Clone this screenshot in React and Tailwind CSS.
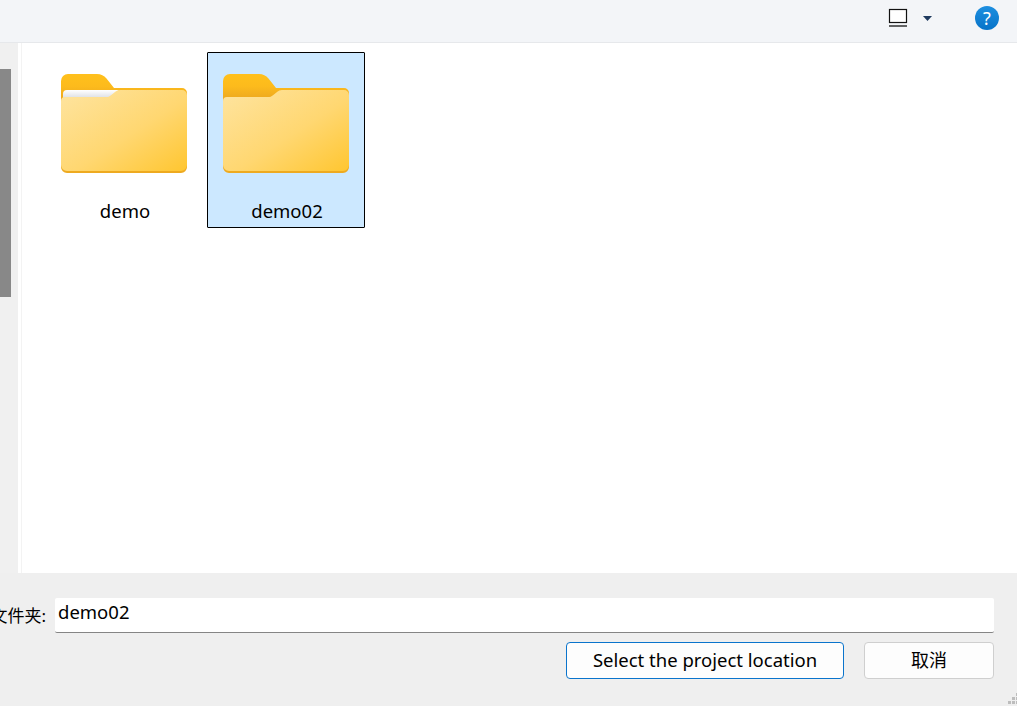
import React from 'react';

const FONT = "font-['Noto_Sans','Noto_Sans_CJK_SC',sans-serif]";

const Folder = ({ id, paper }) => (
  <svg width="126" height="99" viewBox="0 0 126 99" className="shrink-0">
    <defs>
      <linearGradient id={`${id}-tab`} gradientUnits="userSpaceOnUse" x1="0" y1="0" x2="0" y2="24">
        <stop offset="0" stopColor="#ffc01c" />
        <stop offset="0.5" stopColor="#fdbb1c" />
        <stop offset="1" stopColor="#eeaa20" />
      </linearGradient>
      <linearGradient id={`${id}-front`} x1="0" y1="0" x2="1" y2="1">
        <stop offset="0" stopColor="#fee4a0" />
        <stop offset="0.55" stopColor="#ffd771" />
        <stop offset="1" stopColor="#ffc630" />
      </linearGradient>
      <linearGradient id={`${id}-paper`} x1="0" y1="0" x2="0" y2="1">
        <stop offset="0" stopColor="#ffffff" />
        <stop offset="1" stopColor="#dcdfe4" />
      </linearGradient>
    </defs>
    <path
      d="M0 7a7 7 0 0 1 7-7h29c4 0 7 1.500 9.500 4.500L53 14h68a5 5 0 0 1 5 5V93a6 6 0 0 1-6 6H6a6 6 0 0 1-6-6Z"
      fill={`url(#${id}-tab)`}
    />
    {paper && (
      <path d="M2 20a4 4 0 0 1 4-4h52l-8 8H2Z" fill={`url(#${id}-paper)`} />
    )}
    <path
      d="M0 27a4 4 0 0 1 4-4h41c2 0 3.500-.5 5-1.800L54 18c1.500-1.300 3-2 5-2h62a5 5 0 0 1 5 5V91a6 6 0 0 1-6 6H6a6 6 0 0 1-6-6Z"
      fill={`url(#${id}-front)`}
    />
  </svg>
);

const Tile = ({ name, selected, paper }) => (
  <div
    className={`w-[158px] h-[176px] flex flex-col items-center pt-[21px] border ${
      selected ? 'bg-[#cce8ff] border-black rounded-[1px]' : 'border-transparent'
    }`}
  >
    <Folder id={name} paper={paper} />
    <div className="mt-[25px] ml-[2px] text-[18.500px] leading-[26px] text-black">{name}</div>
  </div>
);

export default function App() {
  return (
    <div className={`w-[1017px] h-[706px] flex flex-col overflow-hidden bg-[#efefef] ${FONT}`}>
      {/* toolbar */}
      <div className="h-[43px] shrink-0 flex items-start justify-end bg-[#f3f5f8] border-b border-[#e6e8eb]">
        <svg width="20" height="20" viewBox="0 0 20 20" className="mt-[8px]">
          <rect x="1.500" y="1.500" width="17" height="13" fill="#fff" stroke="#111" strokeWidth="1.200" />
          <path d="M1 18h18" stroke="#111" strokeWidth="1.300" />
        </svg>
        <svg width="9" height="5" viewBox="0 0 9 5" className="mt-[16px] ml-[15px]">
          <path d="M0 0h9L4.500 5Z" fill="#1f3a5f" />
        </svg>
        <div className="mt-[6px] ml-[43px] mr-[18px] w-[24px] h-[24px] rounded-full bg-gradient-to-b from-[#1d8fe0] to-[#0673c8] text-white text-[18px] leading-[24px] text-center">
          ?
        </div>
      </div>

      {/* body */}
      <div className="h-[530px] shrink-0 flex">
        <div className="w-[18px] shrink-0 bg-[#f0f0f0] pt-[26px]">
          <div className="w-[11px] h-[228px] bg-[#888888]" />
        </div>
        <div className="w-[3px] shrink-0 bg-white" />
        <div className="w-px shrink-0 bg-[#f3f3f3]" />
        <div className="flex-1 bg-white flex items-start gap-[4px] pl-[23px] pt-[9px]">
          <Tile name="demo" paper />
          <Tile name="demo02" selected />
        </div>
      </div>

      {/* footer */}
      <div className="relative flex-1 flex flex-col pt-[25px] pr-[23px]">
        <div className="flex items-center">
          <div className="w-[46px] flex justify-end overflow-hidden whitespace-nowrap text-[17px] text-black">
            文件夹:
          </div>
          <div className="ml-[9px] flex-1 h-[35px] bg-white border-b border-[#858585] rounded-[2px] pl-[3px] text-[18.500px] leading-[28px] text-black">
            demo02
          </div>
        </div>
        <div className="mt-[9px] flex justify-end gap-[20px]">
          <button className="w-[278px] h-[37px] pb-[2px] rounded-[4px] border border-[#0a74cc] bg-[#fdfdfd] text-[18.500px] text-black">
            Select the project location
          </button>
          <button className="w-[130px] h-[37px] rounded-[4px] border border-[#cfcfcf] bg-[#fdfdfd] text-[18px] text-black">
            取消
          </button>
        </div>
        <svg width="9" height="11" viewBox="0 0 9 11" className="absolute right-0 bottom-[2px]">
          <path d="M8 0h3v3H8ZM4 4h3v3H4ZM8 4h3v3H8ZM0 8h3v3H0ZM4 8h3v3H4ZM8 8h3v3H8Z" fill="#bdbdbd" />
        </svg>
      </div>
    </div>
  );
}
